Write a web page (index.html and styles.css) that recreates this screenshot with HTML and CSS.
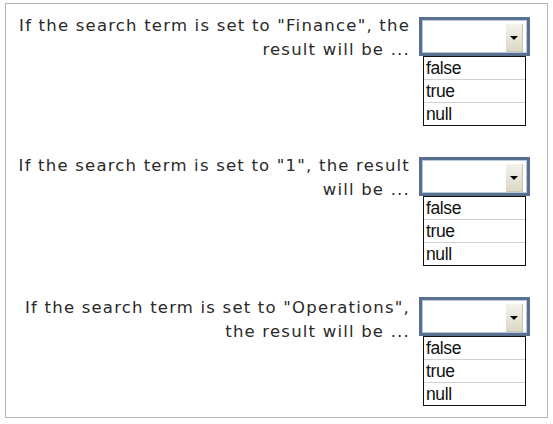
FILE: index.html
```html
<!DOCTYPE html>
<html>
<head>
<meta charset="utf-8">
<link rel="stylesheet" href="styles.css">
</head>
<body>
<div class="frame">
  <div class="row">
    <div class="question">If the search term is set to "Finance", the<br>result will be ...</div>
    <div class="answer">
      <div class="combo"><span class="btn"><span class="arrow"></span></span></div>
      <ul class="list"><li>false</li><li>true</li><li>null</li></ul>
    </div>
  </div>
  <div class="row">
    <div class="question">If the search term is set to "1", the result<br>will be ...</div>
    <div class="answer">
      <div class="combo"><span class="btn"><span class="arrow"></span></span></div>
      <ul class="list"><li>false</li><li>true</li><li>null</li></ul>
    </div>
  </div>
  <div class="row row-last">
    <div class="question">If the search term is set to "Operations",<br>the result will be ...</div>
    <div class="answer">
      <div class="combo"><span class="btn"><span class="arrow"></span></span></div>
      <ul class="list"><li>false</li><li>true</li><li>null</li></ul>
    </div>
  </div>
</div>
</body>
</html>
```

FILE: styles.css
```css
html, body {
  margin: 0;
  padding: 0;
  background: #ffffff;
}
.frame {
  margin: 3px 0 0 5px;
  width: 541px;
  height: 413px;
  border: 1px solid #b4b4b4;
  position: relative;
}
.frame::after {
  content: "";
  position: absolute;
  left: -1px;
  top: 413px;
  width: 1px;
  height: 10px;
  background: #b4b4b4;
}
.row {
  height: 140px;
  display: flex;
  padding-top: 10px;
  box-sizing: border-box;
}
.row-last {
  padding-top: 12px;
}
.question {
  width: 404px;
  text-align: right;
  font-family: "DejaVu Sans", Verdana, sans-serif;
  font-size: 16.5px;
  letter-spacing: 1.2px;
  line-height: 24px;
  color: #2a2a2a;
}
.answer {
  margin-left: 9px;
  padding-top: 3px;
}
.row-last .answer {
  padding-top: 1px;
}
.combo {
  height: 32px;
  border: 3px solid #56708e;
  box-shadow: inset 0 0 0 1px #b9cadc;
  background: #fff;
  display: flex;
  justify-content: flex-end;
  align-items: flex-end;
  padding: 0 4px 1px 0;
  box-sizing: content-box;
  width: 101px;
}
.btn {
  width: 16px;
  height: 27px;
  background: linear-gradient(#f4f2ea, #dcd8c8);
  border-right: 1px solid #c8c4b4;
  border-bottom: 1px solid #c8c4b4;
  display: flex;
  align-items: center;
  justify-content: center;
}
.arrow {
  width: 0;
  height: 0;
  border-left: 4px solid transparent;
  border-right: 4px solid transparent;
  border-top: 4px solid #000;
}
.list {
  list-style: none;
  margin: 0 0 0 4px;
  padding: 0;
  width: 101px;
  border: 1px solid #111;
  font-family: "Liberation Sans", Arial, sans-serif;
  font-size: 17.5px;
  letter-spacing: -0.4px;
  color: #111;
}
.list li {
  height: 22px;
  line-height: 22px;
  padding-left: 2px;
  border-top: 1px solid #d0d0d0;
}
.list li:first-child {
  border-top: none;
}
```
